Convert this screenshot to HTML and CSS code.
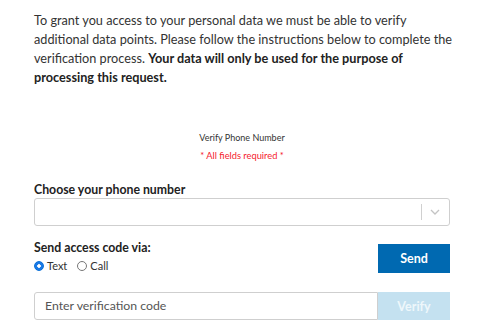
FILE: index.html
```html
<!DOCTYPE html>
<html lang="en">
<head>
<meta charset="utf-8">
<link rel="stylesheet" href="styles.css">
</head>
<body>
<div class="page">
  <p class="intro">To grant you access to your personal data we must be able to verify<br>additional data points. Please follow the instructions below to complete the<br>verification process. <strong>Your data will only be used for the purpose of<br>processing this request.</strong></p>
  <div class="heading">
    <div class="title">Verify Phone Number</div>
    <div class="required">* All fields required *</div>
  </div>
  <label class="label choose">Choose your phone number</label>
  <div class="select">
    <div class="select-value"></div>
    <div class="select-ind">
      <span class="sep"></span>
      <svg class="chev" width="10" height="6" viewBox="0 0 10 6"><path d="M1 1l4 4 4-4" fill="none" stroke="#c4c4c4" stroke-width="1.3"/></svg>
    </div>
  </div>
  <div class="send-row">
    <div class="send-left">
      <div class="label">Send access code via:</div>
      <div class="radios">
        <label class="radio"><span class="dot on"></span>Text</label>
        <label class="radio"><span class="dot"></span>Call</label>
      </div>
    </div>
    <button class="btn send">Send</button>
  </div>
  <div class="verify-row">
    <div class="code-input">Enter verification code</div>
    <button class="btn verify">Verify</button>
  </div>
</div>
</body>
</html>
```
FILE: styles.css
```css
html, body { margin: 0; padding: 0; background: #fff; }
body { font-family: Lato, "Noto Sans", sans-serif; color: #222; }
.page { width: 416px; padding: 11px 0 0 34px; }
.intro { margin: 0 -16px 0 0; font-size: 12.7px; line-height: 19px; color: #333; }
.intro strong { font-weight: 700; color: #222; }
.heading { text-align: center; margin-top: 45px; }
.title { font-size: 9px; line-height: 12px; color: #333; }
.required { font-size: 9.3px; line-height: 12px; color: #f5222d; margin-top: 6px; }
.label { display: block; font-size: 12.3px; font-weight: 700; line-height: 14px; color: #222; }
.label.choose { margin-top: 21px; }
.select { margin-top: 1px; border: 1px solid #cfcfcf; border-radius: 3px; display: flex; box-sizing: border-box; height: 28px; }
.select-value { flex: 1; }
.select-ind { display: flex; align-items: center; width: 28px; }
.sep { width: 1px; height: 16px; background: #d0d0d0; }
.chev { margin-left: 8px; }
.send-row { display: flex; justify-content: space-between; align-items: flex-start; margin-top: 18px; }
.send-left { margin-top: -3px; }
.radios { display: flex; gap: 10px; margin-top: 4px; }
.radio { display: flex; align-items: center; font-size: 11px; line-height: 14px; color: #333; }
.dot { border-radius: 50%; border: 1px solid #777; margin-right: 3px; box-sizing: border-box; width: 10px; height: 10px; }
.dot.on { border: 1px solid #0a6fd8; background: radial-gradient(circle, #fff 0 1.5px, #1a7ae6 2px); }
.btn { border: 0; font-family: inherit; font-weight: 700; font-size: 12.5px; color: #fff; width: 72px; height: 29px; padding: 0; }
.send { background: #0069b1; }
.verify-row { display: flex; margin-top: 19px; }
.code-input { flex: 1; height: 28px; box-sizing: border-box; border: 1px solid #cfcfcf; border-radius: 3px 0 0 3px; font-size: 12.3px; line-height: 26px; padding-left: 10px; color: #555; }
.verify { background: #c4e1f0; height: 28px; color: #eef7fb; }
```
